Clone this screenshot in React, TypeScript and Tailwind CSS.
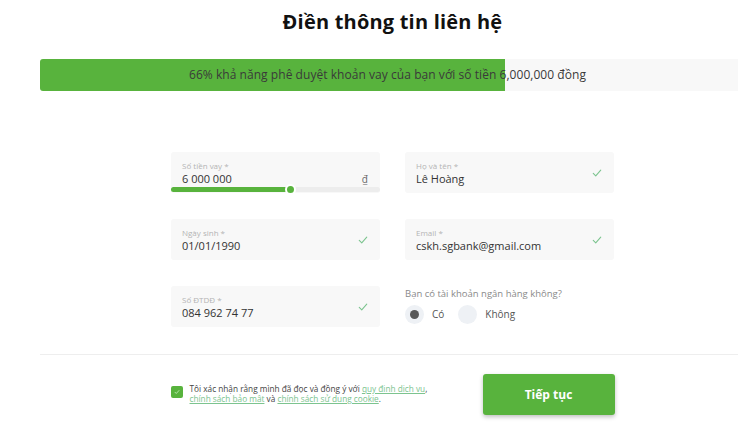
import React from 'react';

const font = { fontFamily: '"Open Sans", "Noto Sans", sans-serif' };

function Check() {
  return (
    <svg className="w-[10px] h-[10px]" viewBox="0 0 12 12" fill="none">
      <path d="M1.5 6.5l3 3 6-7" stroke="#7cc48f" strokeWidth="1.3" strokeLinecap="round" strokeLinejoin="round" />
    </svg>
  );
}

function Field({ label, value, check = true }: { label: string; value: string; check?: boolean }) {
  return (
    <div className="h-[41px] w-[209px] rounded-[3px] bg-[#f8f8f8] flex items-center justify-between pl-[11px] pr-[12px]">
      <div className="flex flex-col">
        <span className="text-[8px] leading-[12px] text-[#b4b4b4]">{label}</span>
        <span className="text-[11px] leading-[14px] text-[#333]">{value}</span>
      </div>
      {check && <Check />}
    </div>
  );
}

function AmountField() {
  return (
    <div className="relative h-[41px] w-[209px] rounded-[3px] bg-[#f8f8f8] pl-[11px] pr-[12px] pt-[8px]">
      <div className="flex flex-col">
        <span className="text-[8px] leading-[12px] text-[#b4b4b4]">Số tiền vay *</span>
        <div className="flex justify-between items-center">
          <span className="text-[11px] leading-[14px] text-[#333]">6 000 000</span>
          <span className="text-[10px] leading-[14px] text-[#666]">₫</span>
        </div>
      </div>
      <div className="absolute left-0 right-0 bottom-[1px] h-[5px] rounded-full bg-[#ededed]">
        <div className="h-full w-[119px] rounded-full bg-[#58b33d]" />
        <div className="absolute left-[114px] top-[-3px] w-[11px] h-[11px] rounded-full bg-[#58b33d] border-2 border-white" />
      </div>
    </div>
  );
}

function Radio({ label, checked }: { label: string; checked?: boolean }) {
  return (
    <div className="flex items-center gap-[8px]">
      <div className="w-[19px] h-[19px] rounded-full bg-[#eef1f5] flex items-center justify-center">
        {checked && <div className="w-[9px] h-[9px] rounded-full bg-[#595959]" />}
      </div>
      <span className="text-[10px] text-[#555]">{label}</span>
    </div>
  );
}

export default function App() {
  return (
    <div className="w-[738px] h-[438px] overflow-hidden bg-white" style={font}>
      <div className="w-[705px] ml-[40px]">
        <h1 className="pt-[8px] text-center text-[20px] leading-[28px] font-bold text-[#111] tracking-[0.2px]">Điền thông tin liên hệ</h1>

        <div className="relative mt-[23px] h-[32px] rounded-[3px] bg-[#f8f8f8] overflow-hidden">
          <div className="absolute left-0 top-0 bottom-0 w-[465px] bg-[#58b33d]" />
          <div className="relative h-full pr-[10px] flex items-center justify-center text-[12px] text-[#3a3a3a] tracking-[0.05px]">
            66% khả năng phê duyệt khoản vay của bạn với số tiền 6,000,000 đồng
          </div>
        </div>

        <div className="mx-auto mt-[61px] w-[443px] grid grid-cols-2 gap-x-[25px] gap-y-[26px]">
          <AmountField />
          <Field label="Họ và tên *" value="Lê Hoàng" />
          <Field label="Ngày sinh *" value="01/01/1990" />
          <Field label="Email *" value="cskh.sgbank@gmail.com" />
          <Field label="Số ĐTDĐ *" value="084 962 74 77" />
          <div className="flex flex-col pt-[1px]">
            <span className="text-[9.5px] leading-[14px] text-[#8a8a8a]">Bạn có tài khoản ngân hàng không?</span>
            <div className="mt-[4px] flex items-center gap-[14px]">
              <Radio label="Có" checked />
              <Radio label="Không" />
            </div>
          </div>
        </div>

        <div className="mt-[27px] h-px bg-[#eeeeee]" />

        <div className="mx-auto mt-[19px] w-[444px] flex items-center justify-between">
          <div className="flex items-start gap-[7px] mt-[-1px]">
            <div className="mt-[2px] w-[12px] h-[12px] rounded-[2px] bg-[#58b33d] flex items-center justify-center">
              <svg className="w-[6px] h-[6px]" viewBox="0 0 12 12" fill="none">
                <path d="M2 6.5l2.5 2.5 5.5-6" stroke="#c9efc0" strokeWidth="1.6" strokeLinecap="round" />
              </svg>
            </div>
            <p className="text-[8.25px] leading-[10px] text-[#444]">
              Tôi xác nhận rằng mình đã đọc và đồng ý với{' '}
              <span className="text-[#7cc48f] underline">quy định dịch vụ</span>,
              <br />
              <span className="text-[#7cc48f] underline">chính sách bảo mật</span> và{' '}
              <span className="text-[#7cc48f] underline">chính sách sử dụng cookie</span>.
            </p>
          </div>
          <button className="w-[132px] h-[41px] rounded-[3px] bg-[#58b33d] text-white text-[12px] font-bold shadow-[0_2px_4px_rgba(0,0,0,0.25)]">
            Tiếp tục
          </button>
        </div>
      </div>
    </div>
  );
}
